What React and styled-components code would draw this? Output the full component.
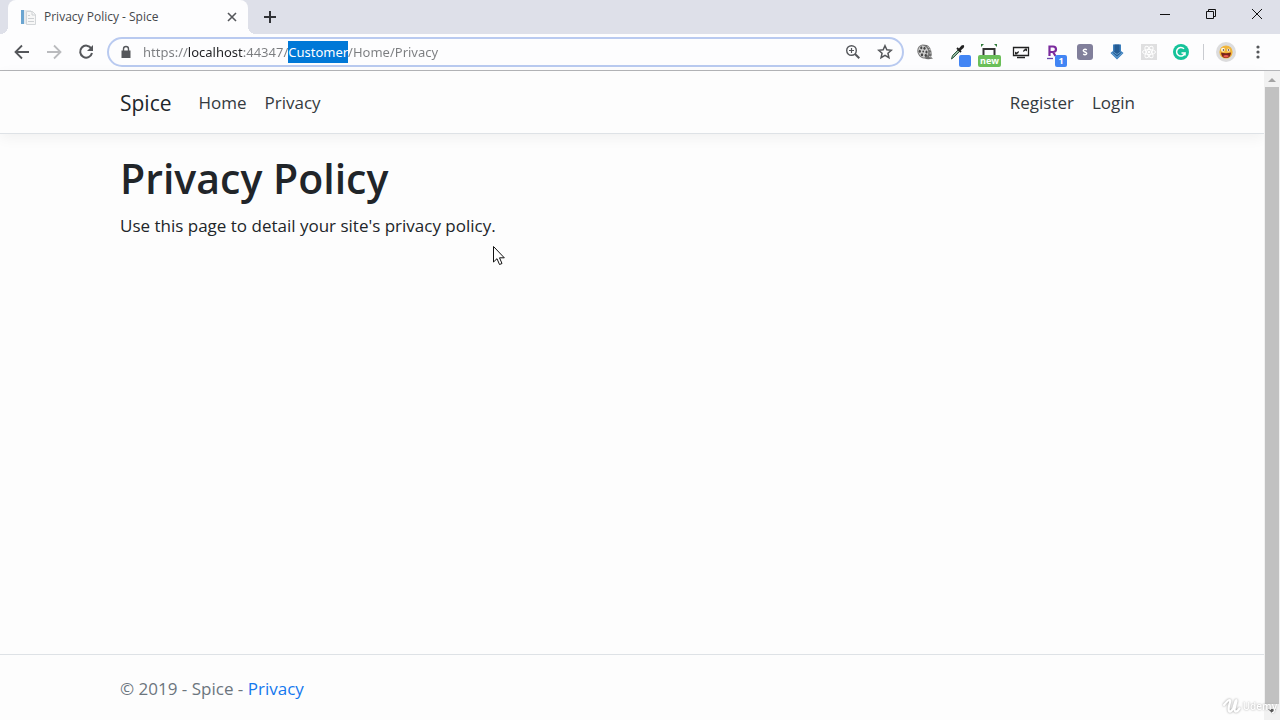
import React, { useEffect, useRef } from "react";
import styled, { createGlobalStyle } from "styled-components";

const GlobalStyle = createGlobalStyle`
  *, *::before, *::after { box-sizing: border-box; }
  body {
    margin: 0;
    background: #fdfdfd;
    color: #212529;
    font: 400 17px/26px "Open Sans", "Noto Sans", sans-serif;
  }
  a { text-decoration: none; }
`;

const Browser = styled.div`
  display: flex;
  flex-direction: column;
  min-height: 100vh;
`;

const TabStrip = styled.div`
  display: flex;
  align-items: flex-start;
  height: 34px;
  padding-left: 8px;
  background: #dee0e9;
`;

const Tab = styled.div`
  position: relative;
  display: flex;
  align-items: center;
  gap: 8px;
  width: 240px;
  height: 34px;
  padding: 0 8px 0 12px;
  border-radius: 8px 8px 0 0;
  background: #fdfdfe;
  &::before, &::after {
    content: "";
    position: absolute;
    bottom: 0;
    width: 8px;
    height: 8px;
  }
  &::before {
    left: -8px;
    background: radial-gradient(circle at 0 0, transparent 8px, #fdfdfe 8px);
  }
  &::after {
    right: -8px;
    background: radial-gradient(circle at 100% 0, transparent 8px, #fdfdfe 8px);
  }
`;

const TabTitle = styled.span`
  flex: 1;
  font-size: 12px;
  line-height: 16px;
  color: #45484c;
`;

const IconButton = styled.button`
  position: relative;
  display: flex;
  flex: none;
  align-items: center;
  justify-content: center;
  width: ${(p) => p.$width || 32}px;
  height: ${(p) => p.$height || 32}px;
  padding: 0;
  border: 0;
  background: none;
  color: ${(p) => p.$color || "#55575b"};
  svg { display: block; }
`;

const NewTab = styled(IconButton)`
  margin-left: 6px;
`;

const WindowControls = styled.div`
  display: flex;
  margin-left: auto;
`;

const Toolbar = styled.div`
  display: flex;
  align-items: center;
  height: 37px;
  padding: 0 6px;
  border-bottom: 1px solid #b4b5b8;
  background: #fdfdfe;
`;

const AddressBar = styled.form`
  display: flex;
  flex: 1;
  align-items: center;
  height: 30px;
  margin: 0 5px;
  padding: 0 1px 0 8px;
  border: 2px solid #b9caf0;
  border-radius: 15px;
  background: #fdfdfe;
`;

const LockIcon = styled.svg`
  flex: none;
  margin-right: 8px;
`;

/* The host part of the address is darker than the rest. */
const AddressInput = styled.input`
  flex: 1;
  min-width: 0;
  height: 22px;
  padding: 0;
  border: 0;
  outline: 0;
  font: 400 13px/22px "Noto Sans", "Open Sans", sans-serif;
  color: #7b7d80;
  caret-color: transparent;
  background: linear-gradient(90deg, #7b7d80 45px, #202124 45px 100px, #7b7d80 100px);
  background-clip: text;
  -webkit-text-fill-color: transparent;
  &::selection {
    background: #0078d7;
    color: #fff;
    -webkit-text-fill-color: #fff;
  }
`;

const Extensions = styled.div`
  display: flex;
`;

const Badge = styled.span`
  position: absolute;
  bottom: 1px;
  right: ${(p) => (p.$wide ? 4 : 2)}px;
  min-width: 12px;
  height: 12px;
  padding: 0 2px;
  border-radius: 2px;
  background: ${(p) => p.$bg};
  color: #fff;
  font: 700 9px/12px "Open Sans", sans-serif;
  text-align: center;
`;

const Separator = styled.span`
  width: 1px;
  height: 16px;
  margin: 0 6px;
  background: #c9cbd0;
`;

const Content = styled.div`
  display: flex;
  flex: 1;
`;

const Page = styled.div`
  display: flex;
  flex: 1;
  flex-direction: column;
  min-width: 0;
`;

const Container = styled.div`
  width: 100%;
  max-width: 1056px;
  margin: 0 auto;
  padding: 0 16px;
`;

const Header = styled.header`
  border-bottom: 1px solid #dee2e6;
  box-shadow: 0 4px 13px rgba(0, 0, 0, 0.05);
`;

const Nav = styled(Container).attrs({ as: "nav" })`
  display: flex;
  align-items: center;
  height: 62px;
  padding-top: 1px;
`;

const Brand = styled.a`
  margin-right: 18px;
  font-size: 21px;
  line-height: 30px;
  color: #212529;
`;

const NavList = styled.ul`
  display: flex;
  margin: ${(p) => (p.$end ? "0 0 0 auto" : "0")};
  padding: 0;
  list-style: none;
`;

const NavLink = styled.a`
  display: block;
  padding: 9px;
  color: #343a40;
`;

const Main = styled(Container).attrs({ as: "main" })`
  flex: 1;
  padding-top: 18px;
`;

const Title = styled.h1`
  margin: 0 0 8px;
  font-size: 41px;
  font-weight: 600;
  line-height: 53px;
`;

const Text = styled.p`
  margin: 0;
`;

const Footer = styled.footer`
  padding-top: 2px;
  border-top: 1px solid #dee2e6;
  line-height: 63px;
  color: #6c757d;
  a { color: #1478ee; }
`;

const Scrollbar = styled.div`
  display: flex;
  flex: none;
  flex-direction: column;
  align-items: center;
  width: 16px;
  background: #f1f1f1;
`;

const Thumb = styled.div`
  flex: 1;
  width: 14px;
  background: #c1c1c1;
`;

const Watermark = styled.div`
  position: fixed;
  right: 3px;
  bottom: 4px;
  display: flex;
  align-items: center;
  gap: 2px;
  color: #fff;
  font: 600 10px/20px "Open Sans", sans-serif;
  text-shadow: 0 0 2px #999;
  svg { filter: drop-shadow(0 0 1px #999); }
`;

const Pointer = styled.svg`
  position: fixed;
  left: 492px;
  top: 245px;
  pointer-events: none;
`;

const Svg = ({ size = 16, children, ...rest }) => (
  <svg width={size} height={size} viewBox={`0 0 ${size} ${size}`} fill="none" aria-hidden="true" {...rest}>
    {children}
  </svg>
);

const Favicon = () => (
  <Svg>
    <path d="M1 1h3v14H1z" fill="#6ba5d1" />
    <path d="M4 1h7v14H4z" fill="#e5e9ed" />
    <path d="M6.500 2.500h6l3 3v10h-9z" fill="#f7f7f7" stroke="#d3d6d9" />
    <path d="M12 2.500V6h3.500M8 9.500h6M8 12.500h6M8 6.500h2" stroke="#cdd0d3" />
  </Svg>
);

const BackIcon = ({ flip }) => (
  <Svg transform={flip ? "scale(-1 1)" : undefined}>
    <path d="M15 8H2M8 1.500 1.500 8 8 14.500" stroke="currentColor" strokeWidth="1.800" />
  </Svg>
);

const ReloadIcon = () => (
  <Svg>
    <path d="M13.300 4.500A6 6 0 1 0 14 9" stroke="currentColor" strokeWidth="2" />
    <path d="M15 1v6H9z" fill="currentColor" />
  </Svg>
);

const ZoomIcon = () => (
  <Svg>
    <circle cx="6.500" cy="6.500" r="4.800" stroke="currentColor" strokeWidth="1.400" />
    <path d="m10 10 4.300 4.300" stroke="currentColor" strokeWidth="2" />
    <path d="M4 6.500h5M6.500 4v5" stroke="currentColor" strokeWidth="1.200" />
  </Svg>
);

const StarIcon = () => (
  <Svg>
    <path d="m8 1.700 1.850 4.150 4.500.450-3.400 3 1 4.450L8 11.450 4.050 13.750l1-4.450-3.400-3 4.500-.450z" stroke="currentColor" strokeWidth="1.500" />
  </Svg>
);

const ReelIcon = () => (
  <Svg>
    <path d="M6 1q6-1 8 5 1.500 5 0 7l2 1.500-3 .5q-3 1-6-1z" fill="#6d6d6d" />
    <ellipse cx="6.300" cy="7.500" rx="5.300" ry="6.500" fill="#cfcfcf" stroke="#777" transform="rotate(-20 6.300 7.500)" />
    <g fill="#484848">
      <ellipse cx="4.300" cy="3.700" rx="1.100" ry="1.500" /><ellipse cx="7.500" cy="4.300" rx="1.100" ry="1.500" />
      <ellipse cx="2.800" cy="7.200" rx="1.100" ry="1.500" /><ellipse cx="9.500" cy="8" rx="1.100" ry="1.500" />
      <ellipse cx="5" cy="10.800" rx="1.200" ry="1.500" /><ellipse cx="8.800" cy="11.500" rx="1.200" ry="1.400" />
      <circle cx="6.200" cy="7.500" r=".9" />
    </g>
    <path d="m10.500 2.500 2 1.500M12 5.500l2 .5M12.500 9h2M12 12.500l2 .5" stroke="#d5d5d5" strokeWidth=".9" />
  </Svg>
);

const DropperIcon = () => (
  <Svg>
    <path d="m2.500 15 1-3.500L9 6l1.500 1.500L5 13z" fill="#8fb39a" stroke="#315a43" />
    <path d="m8 4 4 4" stroke="#222" strokeWidth="1.800" />
    <path d="M9.500 5 12.500 1.500q2-1 2.500 0t-.5 2.500L11 7z" fill="#222" />
  </Svg>
);

const CaptureIcon = () => (
  <Svg>
    <path d="M2.500 13V5h11v8" stroke="#333" strokeWidth="2" />
    <path d="M0 0h3L0 3zM16 0h-3l3 3z" fill="#317b3b" />
  </Svg>
);

const ScreenIcon = () => (
  <Svg size={18}>
    <path d="M1.500 4.500h15v8h-15z" stroke="#222" strokeWidth="1.300" />
    <path d="M5 14.500h8" stroke="#222" strokeWidth="1.500" />
    <path d="M3 11.500V8.500l1.200 1L7 8l-.5 2-1.500 1 .5.500zM15 5.500v3l-1.200-1L11 9l.5-2L13 6l-.500-.5z" fill="#222" />
  </Svg>
);

const RIcon = () => (
  <Svg>
    <path d="M4.500 12V2.500H8q3 0 3 2.700T8 8H5M8 8l2.500 4" stroke="#7b2a9d" strokeWidth="2.200" />
    <path d="M2 14.500h6" stroke="#6848ac" strokeWidth="1.300" />
  </Svg>
);

const SessionIcon = () => (
  <Svg>
    <rect width="16" height="16" rx="3" fill="#817f9b" />
    <path d="M9.800 5.800Q8 4.700 6.700 5.800T8 8t1.300 2.200T6.200 10.200" stroke="#fff" strokeWidth="1.400" />
  </Svg>
);

const DownloadIcon = () => (
  <Svg>
    <path d="M4 .5h8V7l2.500 2L8 15.500 1.500 9 4 7z" fill="#3c7fbd" />
    <path d="M5.500.5h5V7l1.500 2-4 3.500L4 9l1.500-2z" fill="#245c94" />
    <path d="m3 9 5 4.500L13 9M4.500 8 8 10.500 11.500 8" stroke="#72aad5" strokeWidth=".8" />
  </Svg>
);

const AtomIcon = () => (
  <Svg>
    <rect width="16" height="16" fill="#dfdfe0" />
    <g stroke="#fff">
      <ellipse cx="8" cy="8" rx="6.500" ry="2.500" />
      <ellipse cx="8" cy="8" rx="6.500" ry="2.500" transform="rotate(60 8 8)" />
      <ellipse cx="8" cy="8" rx="6.500" ry="2.500" transform="rotate(120 8 8)" />
    </g>
    <circle cx="8" cy="8" r="1.300" fill="#fff" />
  </Svg>
);

const GrammarIcon = () => (
  <Svg>
    <circle cx="8" cy="8" r="8" fill="#15c39a" />
    <path d="M11 4.800A4.300 4.300 0 1 0 12 9H8.500M12 9v2.500" stroke="#fff" strokeWidth="1.500" />
  </Svg>
);

const AvatarIcon = () => (
  <Svg size={20}>
    <circle cx="10" cy="10" r="10" fill="#dcdcdd" />
    <circle cx="10" cy="10" r="6.600" fill="#f1b53b" />
    <circle cx="7" cy="7.800" r="2" fill="#fff7df" />
    <circle cx="12.500" cy="8" r="1.600" fill="#fff7df" />
    <circle cx="7.500" cy="8" r=".8" fill="#4c2b18" />
    <circle cx="12.500" cy="8" r=".8" fill="#4c2b18" />
    <path d="M5 10.500q5 1.300 10 0-.5 5.500-5 5.500t-5-5.500" fill="#79231b" />
    <path d="M7 14q3-2 6 0-3 3-6 0" fill="#ed5b50" />
  </Svg>
);

const ScrollArrow = ({ down }) => (
  <Svg>
    <path d={down ? "M4 5h8l-4 4z" : "M4 11h8L8 7z"} fill={down ? "#505050" : "#a3a3a3"} />
  </Svg>
);

const EXTENSIONS = [
  { name: "Video downloader", Icon: ReelIcon },
  { name: "Color picker", Icon: DropperIcon, badge: "", bg: "#4285f4" },
  { name: "Screen capture", Icon: CaptureIcon, badge: "new", bg: "#6bbf59" },
  { name: "Window resizer", Icon: ScreenIcon },
  { name: "Rewards", Icon: RIcon, badge: "1", bg: "#4285f4" },
  { name: "Session manager", Icon: SessionIcon },
  { name: "Download manager", Icon: DownloadIcon },
  { name: "Developer tools", Icon: AtomIcon },
  { name: "Grammar checker", Icon: GrammarIcon },
];

const URL_TEXT = "https://localhost:44347/Customer/Home/Privacy";

function Address() {
  const ref = useRef(null);
  useEffect(() => {
    const start = URL_TEXT.indexOf("Customer");
    ref.current.focus();
    ref.current.setSelectionRange(start, start + "Customer".length);
  }, []);
  return (
    <AddressBar onSubmit={(e) => e.preventDefault()}>
      <LockIcon width="18" height="16" viewBox="0 0 18 16" fill="none" aria-hidden="true">
        <path d="M4.500 6.500h9V14h-9z" fill="#55575b" />
        <path d="M6.500 7V5a2.500 2.500 0 0 1 5 0v2" stroke="#55575b" strokeWidth="1.400" />
      </LockIcon>
      <AddressInput ref={ref} aria-label="Address" defaultValue={URL_TEXT} spellCheck={false} />
      <IconButton type="button" aria-label="Zoom" $height={26}><ZoomIcon /></IconButton>
      <IconButton type="button" aria-label="Bookmark this page" $height={26}><StarIcon /></IconButton>
    </AddressBar>
  );
}

export default function App() {
  return (
    <Browser>
      <GlobalStyle />
      <TabStrip>
        <Tab>
          <Favicon />
          <TabTitle>Privacy Policy - Spice</TabTitle>
          <IconButton aria-label="Close tab" $width={16} $height={16}>
            <Svg><path d="m4 4 8 8M12 4l-8 8" stroke="currentColor" strokeWidth="1.600" /></Svg>
          </IconButton>
        </Tab>
        <NewTab aria-label="New tab" $color="#303236" $height={34}>
          <Svg><path d="M8 2v12M2 8h12" stroke="currentColor" strokeWidth="2" /></Svg>
        </NewTab>
        <WindowControls>
          <IconButton aria-label="Minimize" $width={46} $height={28} $color="#111">
            <Svg size={10}><path d="M0 5.500h10" stroke="currentColor" /></Svg>
          </IconButton>
          <IconButton aria-label="Restore" $width={46} $height={28} $color="#111">
            <Svg size={10}><path d="M.5 2.500h7v7h-7zM2.500 2.500v-2h7v7h-2" stroke="currentColor" /></Svg>
          </IconButton>
          <IconButton aria-label="Close" $width={46} $height={28} $color="#111">
            <Svg size={10}><path d="m0 0 10 10M10 0 0 10" stroke="currentColor" /></Svg>
          </IconButton>
        </WindowControls>
      </TabStrip>
      <Toolbar>
        <IconButton aria-label="Back"><BackIcon /></IconButton>
        <IconButton aria-label="Forward" $color="#babbbe"><BackIcon flip /></IconButton>
        <IconButton aria-label="Reload"><ReloadIcon /></IconButton>
        <Address />
        <Extensions>
          {EXTENSIONS.map(({ name, Icon, badge, bg }) => (
            <IconButton key={name} aria-label={name}>
              <Icon />
              {badge !== undefined && <Badge $bg={bg} $wide={badge.length > 1}>{badge}</Badge>}
            </IconButton>
          ))}
        </Extensions>
        <Separator />
        <IconButton aria-label="Profile"><AvatarIcon /></IconButton>
        <IconButton aria-label="Menu">
          <Svg><g fill="currentColor"><circle cx="8" cy="3" r="1.600" /><circle cx="8" cy="8" r="1.600" /><circle cx="8" cy="13" r="1.600" /></g></Svg>
        </IconButton>
      </Toolbar>
      <Content>
        <Page>
          <Header>
            <Nav>
              <Brand href="#">Spice</Brand>
              <NavList>
                <li><NavLink href="#">Home</NavLink></li>
                <li><NavLink href="#">Privacy</NavLink></li>
              </NavList>
              <NavList $end>
                <li><NavLink href="#">Register</NavLink></li>
                <li><NavLink href="#">Login</NavLink></li>
              </NavList>
            </Nav>
          </Header>
          <Main>
            <Title>Privacy Policy</Title>
            <Text>Use this page to detail your site's privacy policy.</Text>
          </Main>
          <Footer>
            <Container>© 2019 - Spice - <a href="#">Privacy</a></Container>
          </Footer>
        </Page>
        <Scrollbar aria-hidden="true">
          <ScrollArrow />
          <Thumb />
          <ScrollArrow down />
        </Scrollbar>
      </Content>
      <Pointer width="14" height="22" viewBox="0 0 14 22" aria-hidden="true">
        <path d="M1.500 1.500v15.500l3.500-3.300 2.500 5.800 2.500-1-2.500-5.700h4.800z" fill="#fff" stroke="#111" />
      </Pointer>
      <Watermark>
        <Svg size={18}>
          <path d="M1 8q4-5 5.500-5t0 4q-1.500 5-.5 7t4-2l2.500-8q1-2 1 0l-1.500 6q-1 4 .5 4.500t4-3" stroke="#fff" strokeWidth="2.200" strokeLinecap="round" />
        </Svg>
        Udemy
      </Watermark>
    </Browser>
  );
}
